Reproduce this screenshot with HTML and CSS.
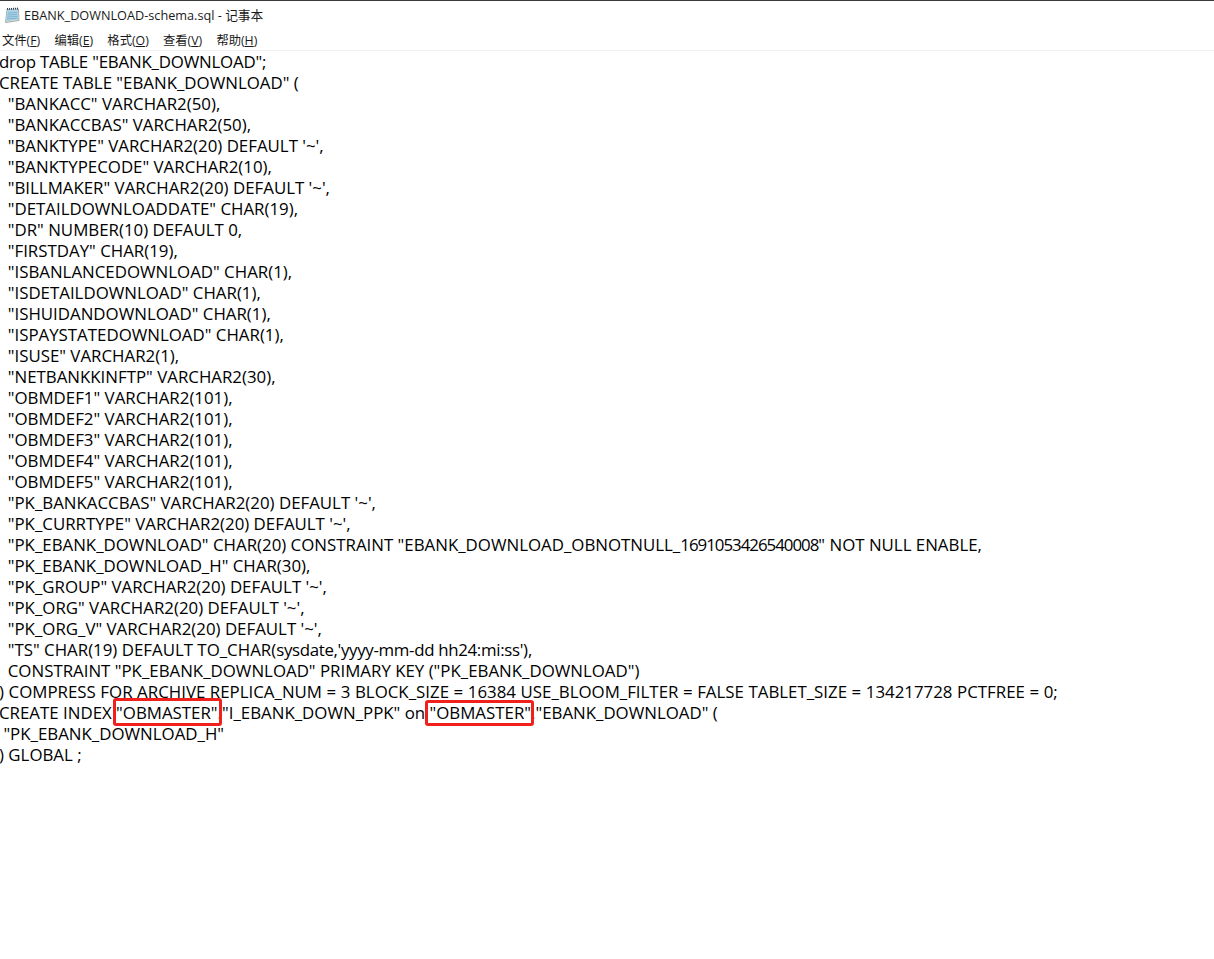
FILE: index.html
```html
<!DOCTYPE html>
<html lang="zh">
<head>
<meta charset="utf-8">
<title>EBANK_DOWNLOAD-schema.sql - 记事本</title>
<link rel="stylesheet" href="styles.css">
</head>
<body>
<div class="window">
  <header class="titlebar">
    <svg class="app-icon" width="16" height="17" viewBox="0 0 16 17" aria-hidden="true">
      <path d="M3 2.5 L14.5 2 L15 13.5 L1.5 15.5 Z" fill="#e8dfc4" stroke="#8d9aa0" stroke-width="0.8"/>
      <path d="M3 3 L14 2.5 L14.3 12.5 L2 14.5 Z" fill="#a9d2e8"/>
      <path d="M4 6 L13 5.5 M3.6 8 L13.2 7.5 M3.3 10 L13.4 9.5 M3 12 L13.5 11.3" stroke="#7fb0cb" stroke-width="0.9" fill="none"/>
      <path d="M3 2 L14.5 1.5" stroke="#33424c" stroke-width="1.8" stroke-dasharray="1 1" fill="none"/>
    </svg>
    <span class="title">EBANK_DOWNLOAD-schema.sql - 记事本</span>
  </header>
  <nav class="menubar">
    <span class="menu">文件(<u>F</u>)</span>
    <span class="menu">编辑(<u>E</u>)</span>
    <span class="menu">格式(<u>O</u>)</span>
    <span class="menu">查看(<u>V</u>)</span>
    <span class="menu">帮助(<u>H</u>)</span>
  </nav>
  <main class="editor"><pre class="code"><span class="first-line">drop TABLE "EBANK_DOWNLOAD";</span>
CREATE TABLE "EBANK_DOWNLOAD" (
  "BANKACC" VARCHAR2(50),
  "BANKACCBAS" VARCHAR2(50),
  "BANKTYPE" VARCHAR2(20) DEFAULT '~',
  "BANKTYPECODE" VARCHAR2(10),
  "BILLMAKER" VARCHAR2(20) DEFAULT '~',
  "DETAILDOWNLOADDATE" CHAR(19),
  "DR" NUMBER(10) DEFAULT 0,
  "FIRSTDAY" CHAR(19),
  "ISBANLANCEDOWNLOAD" CHAR(1),
  "ISDETAILDOWNLOAD" CHAR(1),
  "ISHUIDANDOWNLOAD" CHAR(1),
  "ISPAYSTATEDOWNLOAD" CHAR(1),
  "ISUSE" VARCHAR2(1),
  "NETBANKKINFTP" VARCHAR2(30),
  "OBMDEF1" VARCHAR2(101),
  "OBMDEF2" VARCHAR2(101),
  "OBMDEF3" VARCHAR2(101),
  "OBMDEF4" VARCHAR2(101),
  "OBMDEF5" VARCHAR2(101),
  "PK_BANKACCBAS" VARCHAR2(20) DEFAULT '~',
  "PK_CURRTYPE" VARCHAR2(20) DEFAULT '~',
  "PK_EBANK_DOWNLOAD" CHAR(20) CONSTRAINT "EBANK_DOWNLOAD_OBNOTNULL_<span class="digits">1691053426540008</span>" NOT NULL ENABLE,
  "PK_EBANK_DOWNLOAD_H" CHAR(30),
  "PK_GROUP" VARCHAR2(20) DEFAULT '~',
  "PK_ORG" VARCHAR2(20) DEFAULT '~',
  "PK_ORG_V" VARCHAR2(20) DEFAULT '~',
  "TS" CHAR(19) DEFAULT TO_CHAR(<span class="lower">sysdate,'yyyy-mm-dd hh24:mi:ss'</span>),
  CONSTRAINT "PK_EBANK_DOWNLOAD" PRIMARY KEY ("PK_EBANK_DOWNLOAD")
<span class="wide-line">) COMPRESS FOR ARCHIVE REPLICA_NUM = 3 BLOCK_SIZE = 16384 USE_BLOOM_FILTER = FALSE TABLET_SIZE = 134217728 PCTFREE = 0;</span>
CREATE INDEX <span class="mark mark-first">"OBMASTER"</span>."I_EBANK_DOWN_PPK" on <span class="mark mark-second">"OBMASTER"</span>."EBANK_DOWNLOAD" (
 "PK_EBANK_DOWNLOAD_H"
) GLOBAL ;</pre></main>
</div>
</body>
</html>
```
FILE: styles.css
```css
* { box-sizing: border-box; }
html, body { margin: 0; padding: 0; background: #fff; }
body { overflow: hidden; }
.window {
  width: 1214px;
  height: 959px;
  overflow: hidden;
  border-top: 1px solid #3a3a3a;
  display: flex;
  flex-direction: column;
}
.titlebar {
  height: 29px;
  display: flex;
  align-items: center;
  gap: 4px;
  padding-left: 4px;
  padding-bottom: 3px;
  font: 12.7px "Open Sans", "Noto Sans CJK SC", sans-serif;
  color: #1a1a1a;
}
.app-icon { margin-top: 2px; }
.menubar {
  height: 21px;
  display: flex;
  gap: 14.2px;
  padding-left: 2px;
  border-bottom: 1px solid #f0f0f0;
  font: 12.3px/21px "Open Sans", "Noto Sans CJK SC", sans-serif;
  color: #1a1a1a;
}
.editor { flex: 1; overflow: hidden; }
.code {
  margin: 0 0 0 -1px;
  font: 16.85px/21px "Open Sans", "Noto Sans", sans-serif;
  color: #000;
  white-space: pre;
}
.first-line { letter-spacing: -0.2px; }
.digits { letter-spacing: -1px; }
.lower { letter-spacing: -0.32px; }
.wide-line { word-spacing: 0.2px; }
.mark { position: relative; }
.mark::after {
  content: "";
  position: absolute;
  top: -1px;
  bottom: -2px;
  border: 3px solid #f0201c;
  border-radius: 3px;
}
.mark-first::after { left: -3px; right: -4px; top: -3px; }
.mark-second::after { left: -5px; right: -3px; }
```
